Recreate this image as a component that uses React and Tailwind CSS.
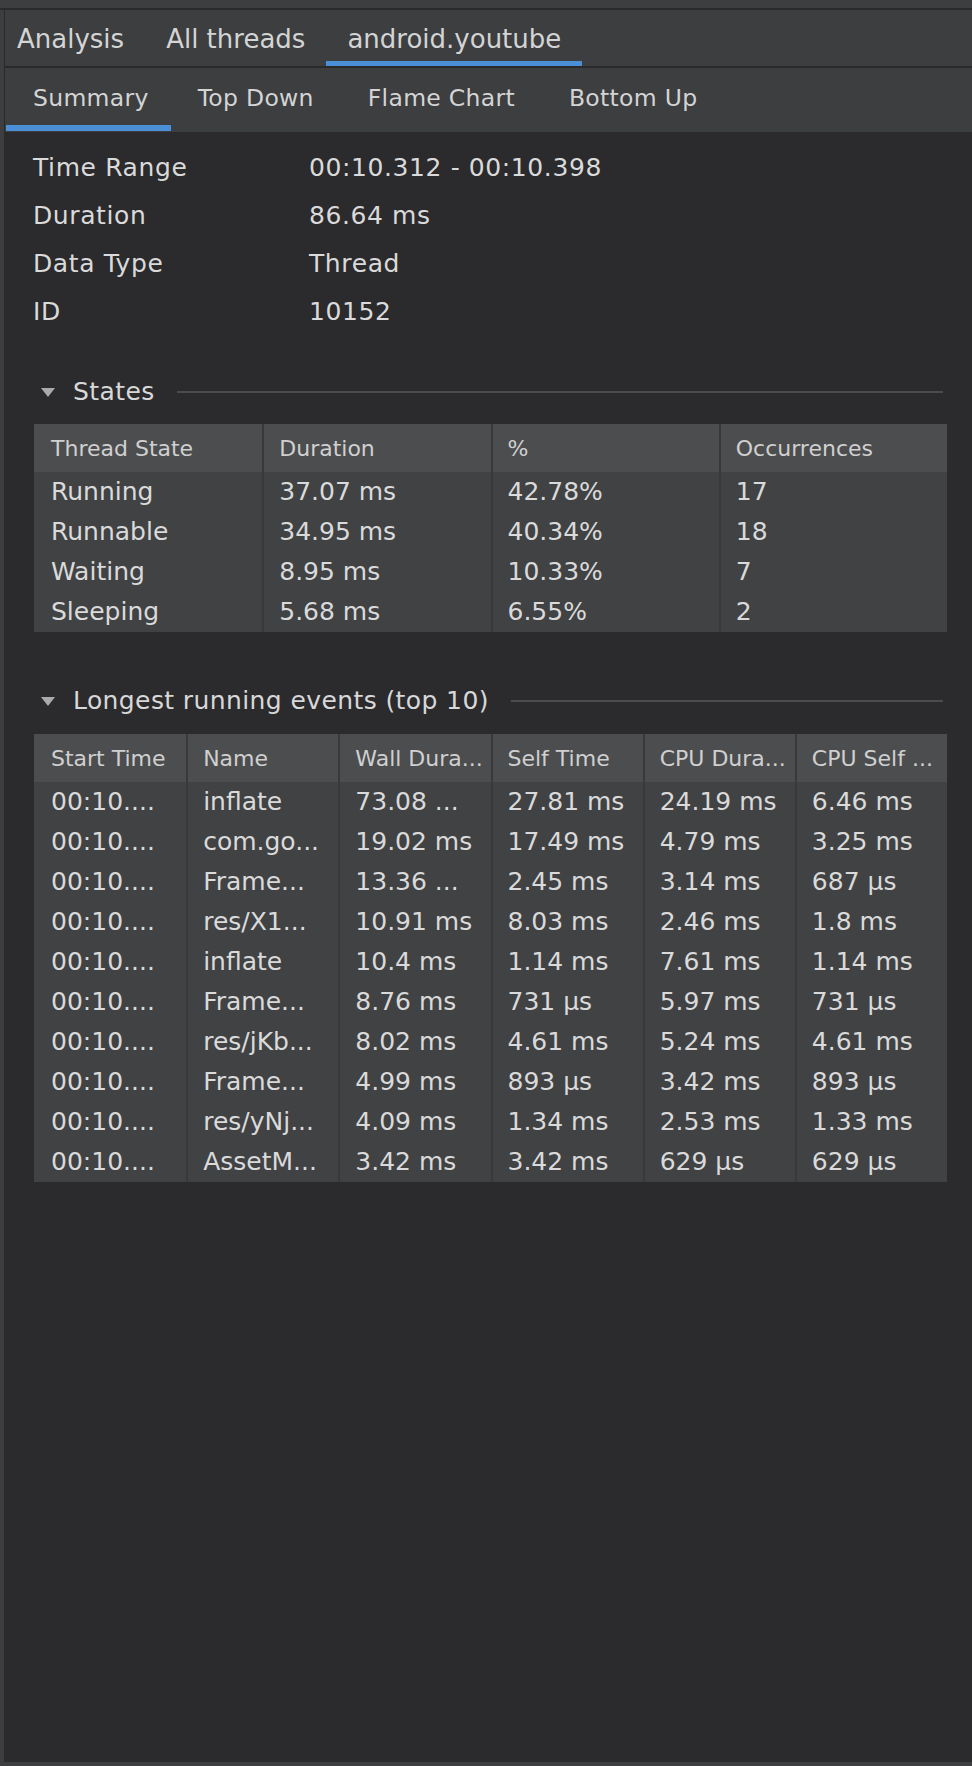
import React from "react";

const topTabs = ["Analysis", "All threads", "android.youtube"];
const subTabs = ["Summary", "Top Down", "Flame Chart", "Bottom Up"];

const summary = [
  ["Time Range", "00:10.312 - 00:10.398"],
  ["Duration", "86.64 ms"],
  ["Data Type", "Thread"],
  ["ID", "10152"],
];

const stateCols = ["Thread State", "Duration", "%", "Occurrences"];
const stateRows = [
  ["Running", "37.07 ms", "42.78%", "17"],
  ["Runnable", "34.95 ms", "40.34%", "18"],
  ["Waiting", "8.95 ms", "10.33%", "7"],
  ["Sleeping", "5.68 ms", "6.55%", "2"],
];

const eventCols = ["Start Time", "Name", "Wall Dura...", "Self Time", "CPU Dura...", "CPU Self ..."];
const eventRows = [
  ["00:10....", "inflate", "73.08 ...", "27.81 ms", "24.19 ms", "6.46 ms"],
  ["00:10....", "com.go...", "19.02 ms", "17.49 ms", "4.79 ms", "3.25 ms"],
  ["00:10....", "Frame...", "13.36 ...", "2.45 ms", "3.14 ms", "687 µs"],
  ["00:10....", "res/X1...", "10.91 ms", "8.03 ms", "2.46 ms", "1.8 ms"],
  ["00:10....", "inflate", "10.4 ms", "1.14 ms", "7.61 ms", "1.14 ms"],
  ["00:10....", "Frame...", "8.76 ms", "731 µs", "5.97 ms", "731 µs"],
  ["00:10....", "res/jKb...", "8.02 ms", "4.61 ms", "5.24 ms", "4.61 ms"],
  ["00:10....", "Frame...", "4.99 ms", "893 µs", "3.42 ms", "893 µs"],
  ["00:10....", "res/yNj...", "4.09 ms", "1.34 ms", "2.53 ms", "1.33 ms"],
  ["00:10....", "AssetM...", "3.42 ms", "3.42 ms", "629 µs", "629 µs"],
];

const SectionHeader = ({ title }) => (
  <div className="flex items-center h-[40px] ml-[36px] mr-[29px]">
    <svg width="14" height="9" viewBox="0 0 14 9" className="shrink-0">
      <polygon points="0,0 14,0 7,9" fill="#a9aaab" />
    </svg>
    <span className="ml-[18px] text-[25px] tracking-[0.4px] text-[#d8d8d8] whitespace-nowrap">{title}</span>
    <div className="flex-1 ml-[22px] h-[2px] bg-[#4b4c4e]" />
  </div>
);

const Table = ({ cols, rows, gridClass }) => (
  <div className="ml-[29px] mr-[25px] bg-[#414244]">
    <div className={"grid h-[48px] bg-[#4c4d4f] " + gridClass}>
      {cols.map((c, i) => (
        <div
          key={c}
          className={
            "flex items-center text-[22px] text-[#d0d0d0] whitespace-nowrap overflow-hidden " +
            (i > 0 ? "pl-[15px] border-l-2 border-[#39393b]" : "pl-[17px]")
          }
        >
          {c}
        </div>
      ))}
    </div>
    <div className={"grid " + gridClass}>
      {cols.map((c, i) => (
        <div key={c} className={i > 0 ? "pl-[15px] border-l-2 border-[#39393b]" : "pl-[17px]"}>
          {rows.map((r, j) => (
            <div
              key={j}
              className="h-[40px] flex items-center text-[25px] text-[#dadada] whitespace-nowrap overflow-hidden"
            >
              {r[i]}
            </div>
          ))}
        </div>
      ))}
    </div>
  </div>
);

export default function App() {
  return (
    <div className="w-[972px] h-[1766px] bg-[#3c3e40] flex flex-col font-['DejaVu_Sans',sans-serif] overflow-hidden">
      {/* window strip above the tool window */}
      <div className="h-[10px] shrink-0 border-b-2 border-[#2a2a2b]" />
      <div className="flex-1 flex flex-col ml-[4px] mb-[4px] border-l border-[#2a2a2b]">
        {/* thread tabs */}
        <div className="flex h-[58px] pt-[3px] shrink-0 border-b-2 border-[#2a2a2b]">
          {topTabs.map((t, i) => (
            <div
              key={t}
              className={
                "relative flex items-center text-[26px] text-[#d4d4d4] whitespace-nowrap " +
                (i === 0 ? "pl-[12px] pr-[21px]" : "px-[21px]")
              }
            >
              {t}
              {i === 2 && <span className="absolute left-0 right-0 bottom-0 h-[5px] bg-[#4a8fd8]" />}
            </div>
          ))}
        </div>
        {/* view tabs */}
        <div className="flex h-[64px] shrink-0">
          {subTabs.map((t, i) => (
            <div
              key={t}
              className={
                "relative flex items-center pb-[2px] text-[23.5px] tracking-[0.3px] text-[#d4d4d4] whitespace-nowrap " +
                (i === 0 ? "ml-[1px] pl-[27px] pr-[22px]" : "px-[27px]")
              }
            >
              {t}
              {i === 0 && <span className="absolute left-0 right-0 bottom-[1px] h-[6px] bg-[#4a8fd8]" />}
            </div>
          ))}
        </div>
        {/* content */}
        <div className="flex-1 bg-[#2b2b2d] pt-[12px]">
          <div className="pl-[28px]">
            {summary.map(([k, v]) => (
              <div key={k} className="flex h-[48px] items-center text-[25px] tracking-[0.6px] text-[#dadada]">
                <div className="w-[276px]">{k}</div>
                <div>{v}</div>
              </div>
            ))}
          </div>

          <div className="mt-[36px]">
            <SectionHeader title="States" />
          </div>
          <div className="mt-[12px]">
            <Table cols={stateCols} rows={stateRows} gridClass="grid-cols-4" />
          </div>

          <div className="mt-[49px]">
            <SectionHeader title="Longest running events (top 10)" />
          </div>
          <div className="mt-[13px]">
            <Table cols={eventCols} rows={eventRows} gridClass="grid-cols-6" />
          </div>
        </div>
      </div>
    </div>
  );
}
